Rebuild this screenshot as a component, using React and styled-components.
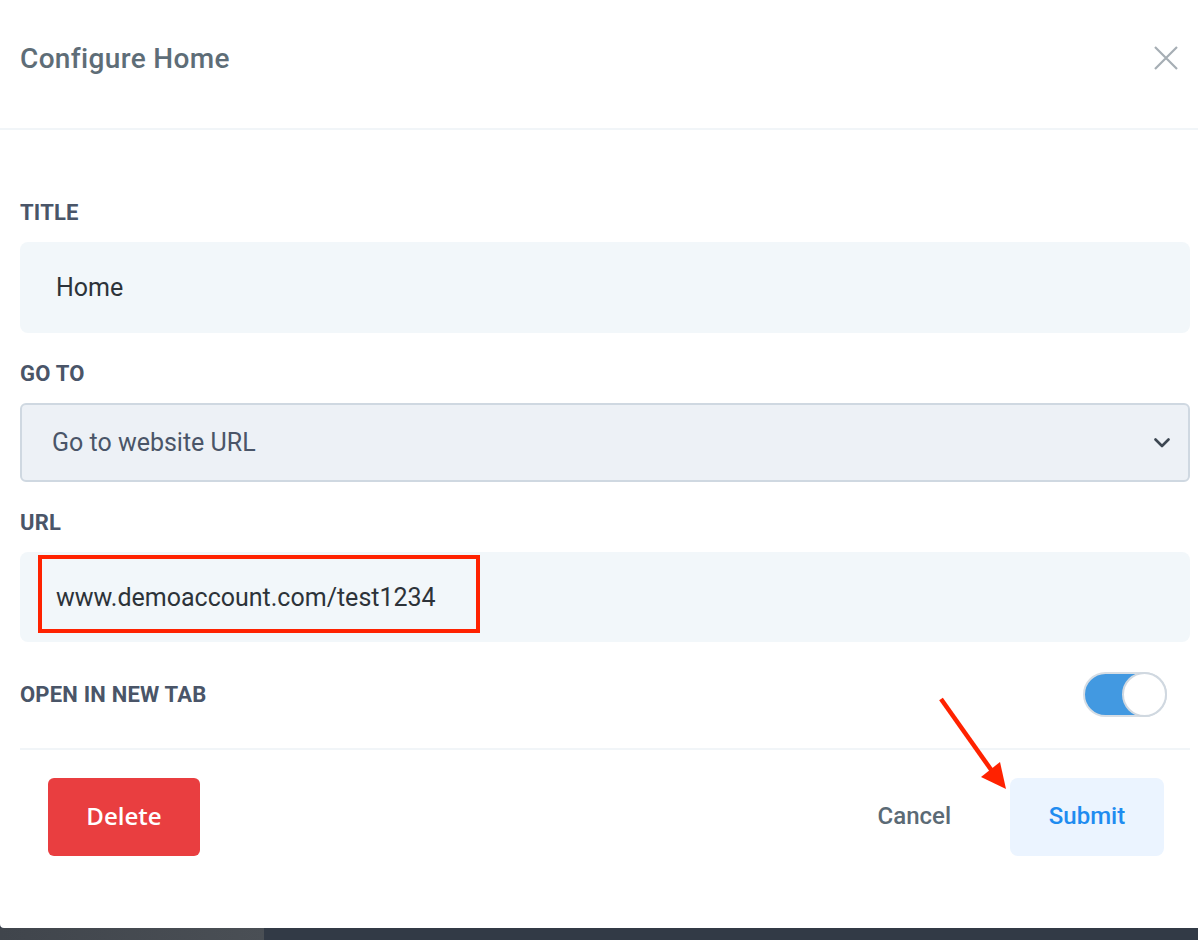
import React from "react";
import styled, { createGlobalStyle } from "styled-components";

const Global = createGlobalStyle`
  html, body { margin: 0; padding: 0; background: #ffffff; }
  body { font-family: Roboto, "Liberation Sans", Arial, sans-serif; }
  * { box-sizing: border-box; }
`;

const Page = styled.div`
  position: relative;
  width: 1198px;
  height: 940px;
  display: flex;
  flex-direction: column;
  overflow: hidden;
  background: #323a46;
`;

const Dialog = styled.div`
  height: 928px;
  background: #ffffff;
  border-bottom-left-radius: 4px;
  display: flex;
  flex-direction: column;
`;

const Header = styled.div`
  height: 130px;
  flex: none;
  display: flex;
  align-items: center;
  justify-content: space-between;
  padding: 0 20px 12px 20px;
  border-bottom: 2px solid #f1f5f8;
`;

const Title = styled.h2`
  margin: 0;
  font-family: Roboto, sans-serif;
  font-size: 28px;
  font-weight: 500;
  color: #5e6d77;
  letter-spacing: 0.35px;
`;

const CloseButton = styled.button`
  border: 0;
  background: transparent;
  padding: 0;
  width: 24px;
  height: 24px;
  display: flex;
  align-items: center;
  justify-content: center;
  cursor: pointer;
`;

const Body = styled.div`
  padding: 70px 8px 0 20px;
  display: flex;
  flex-direction: column;
`;

const Field = styled.div`
  display: flex;
  flex-direction: column;
  gap: 16px;
  margin-bottom: ${(p) => p.$mb ?? 28}px;
`;

const Label = styled.label`
  font-family: Roboto, sans-serif;
  font-size: 22px;
  line-height: 26px;
  font-weight: 700;
  color: #4a5568;
  letter-spacing: 0.2px;
  text-transform: uppercase;
`;

const InputWrap = styled.div`
  position: relative;
`;

const TextInput = styled.input`
  width: 100%;
  height: ${(p) => p.$h}px;
  border: 0;
  outline: none;
  border-radius: 8px;
  background: #f2f7fa;
  padding: 0 36px;
  font-family: Roboto, sans-serif;
  font-size: 25px;
  color: #2d3339;
`;

const Highlight = styled.div`
  position: absolute;
  left: 18px;
  top: 3px;
  width: 442px;
  height: 78px;
  border: 4px solid #ff2200;
  pointer-events: none;
`;

const SelectWrap = styled.div`
  position: relative;
`;

const Select = styled.select`
  appearance: none;
  -webkit-appearance: none;
  width: 100%;
  height: 79px;
  border: 2px solid #cfd8e1;
  border-radius: 6px;
  background: #edf1f6;
  padding: 0 30px;
  font-family: Roboto, sans-serif;
  font-size: 25px;
  color: #4a5568;
  outline: none;
`;

const Chevron = styled.svg`
  position: absolute;
  right: 20px;
  top: 35px;
  pointer-events: none;
`;

const ToggleRow = styled.div`
  margin-top: 30px;
  height: 45px;
  display: flex;
  align-items: center;
  justify-content: space-between;
  padding-right: 23px;
`;

const Track = styled.div`
  width: 84px;
  height: 45px;
  border-radius: 23px;
  background: #4299e1;
  border: 2px solid #d6dde4;
  display: flex;
  align-items: center;
  justify-content: ${(p) => (p.$on ? "flex-end" : "flex-start")};
`;

const Knob = styled.div`
  width: 45px;
  height: 45px;
  margin: -2px;
  border-radius: 50%;
  background: #ffffff;
  border: 2px solid #d0d8e0;
`;

const Divider = styled.div`
  margin-top: 31px;
  height: 2px;
  background: #f1f5f8;
`;

const Footer = styled.div`
  margin-top: 28px;
  display: flex;
  align-items: center;
  padding: 0 26px 0 28px;
`;

const Button = styled.button`
  height: 78px;
  border: 0;
  cursor: pointer;
  font-size: 24px;
  display: flex;
  align-items: center;
  justify-content: center;
  padding-bottom: 4px;
  border-radius: ${(p) => p.$radius ?? 8}px;
  background: ${(p) => p.$bg};
  color: ${(p) => p.$color};
  width: ${(p) => (p.$w ? `${p.$w}px` : "auto")};
  padding-left: ${(p) => (p.$w ? "0" : "30px")};
  padding-right: ${(p) => (p.$w ? "0" : "30px")};
  font-family: ${(p) => p.$font ?? "Roboto, sans-serif"};
  font-weight: ${(p) => p.$weight ?? 500};
`;

const Spacer = styled.div`
  flex: 1;
`;

const Actions = styled.div`
  display: flex;
  align-items: center;
  gap: 29px;
`;

const BottomStrip = styled.div`
  flex: 1;
  display: flex;
`;

const StripLeft = styled.div`
  width: 264px;
  background: linear-gradient(90deg, #40454c, #4a4f55);
`;

const StripRight = styled.div`
  flex: 1;
  background: #323a46;
`;

const ArrowOverlay = styled.svg`
  position: absolute;
  left: 0;
  top: 0;
  pointer-events: none;
`;

export default function App() {
  return (
    <>
      <Global />
      <Page>
        <Dialog>
          <Header>
            <Title>Configure Home</Title>
            <CloseButton aria-label="Close">
              <svg width="24" height="24" viewBox="0 0 24 24">
                <path d="M1 1 L23 23 M23 1 L1 23" stroke="#a6aeb4" strokeWidth="2.2" fill="none" />
              </svg>
            </CloseButton>
          </Header>
          <Body>
            <Field>
              <Label>Title</Label>
              <InputWrap>
                <TextInput $h={91} readOnly value="Home" />
              </InputWrap>
            </Field>
            <Field>
              <Label>Go to</Label>
              <SelectWrap>
                <Select defaultValue="url">
                  <option value="url">Go to website URL</option>
                </Select>
                <Chevron width="16" height="10" viewBox="0 0 16 10">
                  <path d="M1.5 1.5 L8 8 L14.5 1.5" stroke="#3d4752" strokeWidth="2.6" fill="none" strokeLinecap="round" strokeLinejoin="round" />
                </Chevron>
              </SelectWrap>
            </Field>
            <Field $mb={0}>
              <Label>URL</Label>
              <InputWrap>
                <TextInput $h={90} readOnly value="www.demoaccount.com/test1234" />
                <Highlight />
              </InputWrap>
            </Field>
            <ToggleRow>
              <Label>Open in new tab</Label>
              <Track $on>
                <Knob />
              </Track>
            </ToggleRow>
            <Divider />
            <Footer>
              <Button $w={152} $radius={6} $bg="#e93e40" $color="#ffffff" $font='"Open Sans", sans-serif' $weight={600}>
                Delete
              </Button>
              <Spacer />
              <Actions>
                <Button $bg="transparent" $color="#5b6a75">Cancel</Button>
                <Button $w={154} $bg="#ebf4ff" $color="#1f8cf0">Submit</Button>
              </Actions>
            </Footer>
          </Body>
        </Dialog>
        <BottomStrip>
          <StripLeft />
          <StripRight />
        </BottomStrip>
        <ArrowOverlay width="1198" height="940" viewBox="0 0 1198 940">
          <line x1="941" y1="699" x2="992" y2="771" stroke="#ff2200" strokeWidth="4.5" />
          <polygon points="1006,789 981,777 1000,762" fill="#ff2200" />
        </ArrowOverlay>
      </Page>
    </>
  );
}
